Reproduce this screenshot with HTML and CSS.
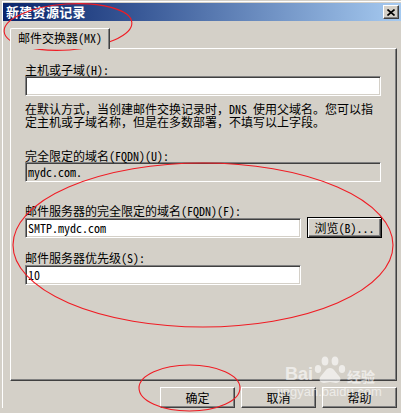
FILE: index.html
```html
<!DOCTYPE html>
<html lang="zh-CN">
<head>
<meta charset="utf-8">
<title>新建资源记录</title>
<link rel="stylesheet" href="styles.css">
</head>
<body>
<div class="window">
  <div class="titlebar">
    <span class="title">新建资源记录</span>
    <button class="close" type="button">
      <svg width="8" height="7" viewBox="0 0 8 7"><path d="M0.5 0.5L7.5 6.5M7.5 0.5L0.5 6.5" stroke="#000" stroke-width="1.6" fill="none"/></svg>
    </button>
  </div>
  <div class="content">
    <div class="tabs"><div class="tab">邮件交换器(MX)</div></div>
    <div class="panel">
      <div class="label">主机或子域(H):</div>
      <div class="field wide"></div>
      <p class="note">在默认方式，当创建邮件交换记录时，<span class="hw">DNS </span>使用父域名。您可以指<br>定主机或子域名称，但是在多数部署，不填写以上字段。</p>
      <div class="label l-fqdn">完全限定的域名(FQDN)(U):</div>
      <div class="field wide readonly">mydc.com.</div>
      <div class="label l-mail">邮件服务器的完全限定的域名(FQDN)(F):</div>
      <div class="row">
        <div class="field narrow f-mail">SMTP.mydc.com</div>
        <button class="btn default" type="button">浏览(B)...</button>
      </div>
      <div class="label l-pri">邮件服务器优先级(S):</div>
      <div class="field narrow f-pri">10</div>
    </div>
    <div class="buttons">
      <button class="btn" type="button">确定</button>
      <button class="btn" type="button">取消</button>
      <button class="btn" type="button">帮助</button>
    </div>
  </div>
</div>

<svg class="marks" width="401" height="413" viewBox="0 0 401 413">
  <ellipse cx="68" cy="27" rx="64" ry="23" transform="rotate(-4 68 27)"/>
  <ellipse cx="203" cy="245" rx="190" ry="82"/>
  <ellipse cx="189.5" cy="388" rx="50.5" ry="23"/>
</svg>

<div class="watermark">
  <div class="wm-top">
    <span class="wm-bai">Bai</span>
    <svg class="wm-paw" width="32" height="28" viewBox="0 0 32 28">
      <ellipse cx="4" cy="13" rx="3.2" ry="4"/>
      <ellipse cx="11" cy="5" rx="3.4" ry="4.5"/>
      <ellipse cx="21" cy="5" rx="3.4" ry="4.5"/>
      <ellipse cx="28" cy="13" rx="3.2" ry="4"/>
      <path d="M16 12c-4 0-6 5-9 8-3 3-1 7 3 7 2 0 4-1 6-1s4 1 6 1c4 0 6-4 3-7-3-3-5-8-9-8z"/>
    </svg>
    <span class="wm-jy">经验</span>
  </div>
  <div class="wm-url">jingyan.baidu.com</div>
</div>
</body>
</html>
```

FILE: styles.css
```css
html, body {
  margin: 0;
  padding: 0;
}

body {
  width: 401px;
  height: 413px;
  overflow: hidden;
  position: relative;
  background: #d4d0c8;
  color: #000;
  font-family: "Noto Sans CJK SC", "Noto Sans", sans-serif;
  font-size: 12px;
  line-height: 13px;
  font-feature-settings: "hwid" 1;
}

.window {
  margin: 1px 0 0 2px;
  border-top: 1px solid #fff;
  border-left: 1px solid #fff;
  padding-top: 1px;
}

.titlebar {
  height: 18px;
  display: flex;
  align-items: center;
  justify-content: space-between;
  padding: 0 2px 0 3px;
  background: linear-gradient(to right, #0a246a 0%, #3a5a98 35%, #a6caf0 100%);
}

.title {
  color: #fff;
  font-weight: bold;
  font-size: 13px;
  line-height: 18px;
  letter-spacing: 0.3px;
}

.close {
  width: 16px;
  height: 14px;
  padding: 0;
  margin: 0;
  display: flex;
  align-items: center;
  justify-content: center;
  box-sizing: border-box;
  background: #d4d0c8;
  border: 1px solid;
  border-color: #fff #404040 #404040 #fff;
  box-shadow: inset -1px -1px #808080;
}

.content {
  padding: 7px 0 0 7px;
}

.tabs {
  display: flex;
}

.tab {
  width: 100px;
  height: 21px;
  box-sizing: border-box;
  padding: 2px 0 0 7px;
  line-height: 14px;
  white-space: nowrap;
  background: #d4d0c8;
  border-top: 1px solid #fff;
  border-left: 1px solid #fff;
  border-right: 1px solid #404040;
  border-top-left-radius: 2px;
  box-shadow: inset -1px 0 #808080;
  position: relative;
  z-index: 1;
  margin-bottom: -1px;
}

.panel {
  width: 387px;
  height: 333px;
  box-sizing: border-box;
  padding: 14px 0 0 14px;
  border: 1px solid;
  border-color: #fff #404040 #404040 #fff;
  box-shadow: inset -1px -1px #808080;
}

.label {
  height: 13px;
  line-height: 13px;
  white-space: nowrap;
}

.field {
  height: 20px;
  box-sizing: border-box;
  padding: 2px 0 0 2px;
  line-height: 14px;
  white-space: nowrap;
  background: #fff;
  border: 1px solid;
  border-color: #808080 #fff #fff #808080;
  box-shadow: inset 1px 1px #404040, inset -1px -1px #d4d0c8;
}

.wide {
  width: 356px;
}

.narrow {
  width: 276px;
}

.readonly {
  background: #d4d0c8;
}

.note {
  margin: 6px 0 0;
  line-height: 13px;
  white-space: nowrap;
  font-feature-settings: normal;
}

.hw {
  font-feature-settings: "hwid" 1;
}

.l-fqdn {
  margin-top: 21px;
}

.l-mail {
  margin-top: 22px;
}

.row {
  display: flex;
  align-items: flex-start;
  gap: 6px;
}

.f-mail {
  margin-top: 1px;
}

.l-pri {
  margin-top: 13px;
}

.f-pri {
  margin-top: 1px;
}

.btn {
  width: 75px;
  height: 21px;
  box-sizing: border-box;
  padding: 0;
  margin: 0;
  font: inherit;
  color: #000;
  background: #d4d0c8;
  border: 1px solid;
  border-color: #fff #404040 #404040 #fff;
  box-shadow: inset -1px -1px #808080;
  white-space: nowrap;
}

.btn.default {
  border: 1px solid #000;
  box-shadow: inset 1px 1px #fff, inset -1px -1px #404040, inset -2px -2px #808080;
}

.buttons {
  width: 387px;
  margin-top: 6px;
  display: flex;
  justify-content: flex-end;
  gap: 6px;
}

.marks {
  position: absolute;
  left: 0;
  top: 0;
  pointer-events: none;
}

.marks ellipse {
  fill: none;
  stroke: #f01c24;
  stroke-width: 1.1;
}

.watermark {
  position: absolute;
  left: 277px;
  top: 356px;
  color: rgba(255, 255, 255, 0.6);
  pointer-events: none;
  font-family: "Liberation Sans", Arial, sans-serif;
  font-feature-settings: normal;
}

.wm-top {
  display: flex;
  align-items: flex-end;
  padding-left: 8px;
}

.wm-bai {
  font-size: 18px;
  font-weight: bold;
  line-height: 18px;
  margin-bottom: 1px;
}

.wm-paw {
  fill: rgba(255, 255, 255, 0.6);
  margin: 0 1px 0 1px;
}

.wm-jy {
  font-family: "Noto Sans CJK SC", sans-serif;
  font-size: 14px;
  font-weight: bold;
  line-height: 16px;
}

.wm-url {
  font-size: 13px;
  line-height: 16px;
  margin-top: 0;
}
```
